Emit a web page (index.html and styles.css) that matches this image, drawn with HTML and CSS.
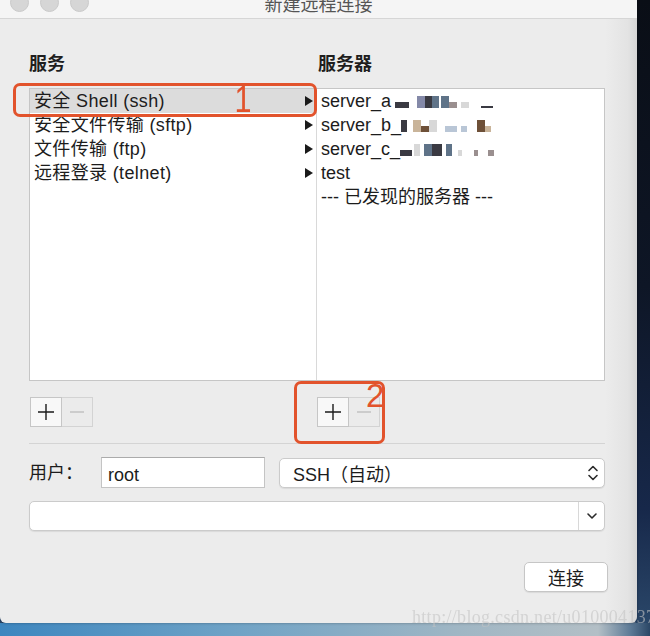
FILE: index.html
```html
<!DOCTYPE html>
<html lang="zh-CN">
<head>
<meta charset="utf-8">
<title>新建远程连接</title>
<link rel="stylesheet" href="styles.css">
</head>
<body>
<div class="window">
  <div class="titlebar">
    <div class="lights"><span class="light"></span><span class="light"></span><span class="light"></span></div>
    <div class="title">新建远程连接</div>
    <div></div>
  </div>
  <div class="content">
    <div class="cols headings">
      <div class="heading">服务</div>
      <div class="heading heading-right">服务器</div>
    </div>
    <div class="table">
      <ul class="list list-services">
        <li class="row selected"><span>安全 Shell (ssh)</span><i class="arrow"></i></li>
        <li class="row"><span>安全文件传输 (sftp)</span><i class="arrow"></i></li>
        <li class="row"><span>文件传输 (ftp)</span><i class="arrow"></i></li>
        <li class="row"><span>远程登录 (telnet)</span><i class="arrow"></i></li>
      </ul>
      <ul class="list list-servers">
        <li class="row">server_a<span class="mosaic"><i class="mz w14 dark short g4"></i><i class="mz w8 blue g8"></i><i class="mz w7 dark"></i><i class="mz w7 slate"></i><i class="mz w8 slate g2"></i><i class="mz w8 mid short"></i><i class="mz w8 light short g4"></i><i class="mz w12 dark line g12"></i></span></li>
        <li class="row">server_b_<span class="mosaic"><i class="mz w6 dark"></i><i class="mz w8 tan g6"></i><i class="mz w8 brown short"></i><i class="mz w8 light"></i><i class="mz w12 pale short g8"></i><i class="mz w6 pale short g4"></i><i class="mz w8 brown g10"></i><i class="mz w6 tan short"></i></span></li>
        <li class="row">server_c_<span class="mosaic"><i class="mz w12 dark short"></i><i class="mz w6 light g2"></i><i class="mz w8 slate g4"></i><i class="mz w10 dark"></i><i class="mz w6 slate g4"></i><i class="mz w4 light short g6"></i><i class="mz w4 mid short g12"></i><i class="mz w6 mid short g10"></i></span></li>
        <li class="row">test</li>
        <li class="row">--- 已发现的服务器 ---</li>
      </ul>
    </div>
    <div class="cols buttons">
      <div class="seg seg-left">
        <button class="seg-btn plus" type="button"><svg width="18" height="18" viewBox="0 0 18 18"><path d="M9 1v16M1 9h16" stroke="#1a1a1a" stroke-width="1.4" fill="none"/></svg></button>
        <button class="seg-btn minus" type="button"><svg width="16" height="18" viewBox="0 0 16 18"><path d="M1 9h14" stroke="#b8b8b8" stroke-width="1.2" fill="none"/></svg></button>
      </div>
      <div class="seg">
        <button class="seg-btn plus" type="button"><svg width="18" height="18" viewBox="0 0 18 18"><path d="M9 1v16M1 9h16" stroke="#1a1a1a" stroke-width="1.4" fill="none"/></svg></button>
        <button class="seg-btn minus" type="button"><svg width="16" height="18" viewBox="0 0 16 18"><path d="M1 9h14" stroke="#b8b8b8" stroke-width="1.2" fill="none"/></svg></button>
      </div>
    </div>
    <div class="separator"></div>
    <div class="user-row">
      <div class="label">用户：</div>
      <div class="input">root</div>
      <div class="select">
        <span>SSH（自动）</span>
        <svg width="12" height="20" viewBox="0 0 12 20"><path d="M2 7.5l4-4 4 4M2 12.5l4 4 4-4" stroke="#2a2a2a" stroke-width="1.6" fill="none" stroke-linecap="round" stroke-linejoin="round"/></svg>
      </div>
    </div>
    <div class="combo">
      <div class="combo-field"></div>
      <div class="combo-btn"><svg width="12" height="8" viewBox="0 0 12 8"><path d="M2 2l4 4 4-4" stroke="#2a2a2a" stroke-width="1.6" fill="none" stroke-linecap="round" stroke-linejoin="round"/></svg></div>
    </div>
    <div class="actions">
      <button class="btn" type="button">连接</button>
    </div>
  </div>
  <div class="mark mark1"></div>
  <div class="mark-num mark-num1">1</div>
  <div class="mark mark2"></div>
  <div class="mark-num mark-num2">2</div>
</div>
<div class="watermark">http://blog.csdn.net/u010004137</div>
</body>
</html>
```

FILE: styles.css
```css
html, body {
  margin: 0;
  padding: 0;
}
body {
  width: 650px;
  height: 636px;
  overflow: hidden;
  position: relative;
  font-family: "Liberation Sans", "Noto Sans CJK SC", sans-serif;
  color: #1c1c1c;
  background:
    linear-gradient(to right, #3d86bf 0%, #6ea2c6 35%, #9fb6c4 70%, #b3bfc6 92%, #5d7a96 97%, #2b4766 100%) left bottom / 100% 13px no-repeat,
    linear-gradient(to bottom, #0a0e16 0%, #0e1626 45%, #17284a 80%, #2c4a6c 100%);
}
.window {
  width: 637px;
  height: 623px;
  position: relative;
  border-radius: 0 0 6px 6px;
  background: linear-gradient(to right, #ececec 0, #ececec 605px, #e3e3e3 628px, #d6d6d6 637px);
  box-shadow: 0 0 3px rgba(0, 0, 0, 0.35);
  overflow: hidden;
}
.titlebar {
  height: 18px;
  background: #f5f5f5;
  border-bottom: 1px solid #d6d6d6;
  display: grid;
  grid-template-columns: 1fr auto 1fr;
  overflow: hidden;
}
.lights {
  display: flex;
  gap: 11px;
  padding-left: 10px;
  margin-top: -7px;
}
.light {
  width: 19px;
  height: 19px;
  box-sizing: border-box;
  border-radius: 50%;
  background: #d6d6d6;
  border: 1px solid #cacaca;
}
.title {
  font-size: 18px;
  line-height: 20px;
  margin-top: -5px;
  color: #555;
}
.content {
  padding: 33px 32px 0 29px;
}
.cols {
  display: grid;
  grid-template-columns: 288px 1fr;
}
.headings {
  margin-bottom: 12px;
}
.heading {
  font-size: 18px;
  font-weight: 600;
  line-height: 24px;
  color: #1e1e1e;
}
.heading-right {
  padding-left: 1px;
}
.table {
  display: grid;
  grid-template-columns: 287px 1fr;
  height: 293px;
  box-sizing: border-box;
  border: 1px solid #c6c6c6;
  background: #fff;
}
.list {
  list-style: none;
  margin: 0;
  padding: 0;
}
.list-services {
  border-right: 1px solid #d9d9d9;
}
.row {
  height: 24px;
  line-height: 24px;
  font-size: 18px;
  padding: 0 4px;
  white-space: nowrap;
}
.list-services .row {
  display: flex;
  justify-content: space-between;
  align-items: center;
  padding-right: 3px;
  letter-spacing: 0.35px;
}
.row.selected {
  background: #dcdcdc;
}
.arrow {
  width: 0;
  height: 0;
  border-left: 8px solid #1a1a1a;
  border-top: 5px solid transparent;
  border-bottom: 5px solid transparent;
}
.mosaic {
  display: inline-block;
  filter: blur(0.7px);
}
.mz {
  display: inline-block;
  height: 12px;
  vertical-align: -1px;
}
.mz.short { height: 6px; }
.mz.line { height: 2px; }
.w4 { width: 4px; }
.w6 { width: 6px; }
.w7 { width: 7px; }
.w8 { width: 8px; }
.w10 { width: 10px; }
.w12 { width: 12px; }
.w14 { width: 14px; }
.g2 { margin-left: 2px; }
.g4 { margin-left: 4px; }
.g6 { margin-left: 6px; }
.g8 { margin-left: 8px; }
.g10 { margin-left: 10px; }
.g12 { margin-left: 12px; }
.dark { background: #3a3a42; }
.blue { background: #8489a8; }
.slate { background: #5f7388; }
.mid { background: #9a8f8f; }
.mosaic .light { background: #d8d8d8; border: 0; border-radius: 0; }
.tan { background: #c9b49a; }
.brown { background: #6e5038; }
.pale { background: #b9c6d6; }
.buttons {
  margin-top: 16px;
}
.seg {
  display: flex;
}
.seg-left {
  padding-left: 1px;
}
.seg-btn {
  width: 32px;
  height: 30px;
  box-sizing: border-box;
  padding: 0;
  margin: 0;
  border: 1px solid #c6c6c6;
  background: #f8f8f8;
  display: flex;
  align-items: center;
  justify-content: center;
}
.seg-btn.minus {
  width: 31px;
  border-color: #d3d3d3;
  border-left: none;
  background: #ebebeb;
}
.separator {
  margin-top: 16px;
  height: 1px;
  background: #d4d4d4;
}
.user-row {
  margin-top: 13px;
  display: flex;
  align-items: center;
  height: 31px;
}
.label {
  width: 72px;
  font-size: 18px;
  line-height: 24px;
}
.input {
  width: 164px;
  height: 31px;
  box-sizing: border-box;
  border: 1px solid #c4c4c4;
  border-top-color: #ababab;
  background: #fff;
  font-size: 18px;
  line-height: 24px;
  padding: 5px 0 0 6px;
}
.select {
  margin-left: 14px;
  flex: 1;
  height: 30px;
  box-sizing: border-box;
  border: 1px solid #cbcbcb;
  border-radius: 5px;
  background: #fff;
  box-shadow: 0 1px 1px rgba(0, 0, 0, 0.08);
  display: flex;
  align-items: center;
  justify-content: space-between;
  padding: 0 5px 0 13px;
  font-size: 18px;
}
.combo {
  margin-top: 13px;
  height: 30px;
  box-sizing: border-box;
  display: flex;
  border: 1px solid #cbcbcb;
  border-radius: 5px;
  background: #fff;
  box-shadow: 0 1px 1px rgba(0, 0, 0, 0.08);
  overflow: hidden;
}
.combo-field {
  flex: 1;
}
.combo-btn {
  width: 25px;
  border-left: 1px solid #d8d8d8;
  display: flex;
  align-items: center;
  justify-content: center;
}
.actions {
  margin-top: 31px;
  margin-right: -3px;
  display: flex;
  justify-content: flex-end;
}
.btn {
  width: 84px;
  height: 30px;
  box-sizing: border-box;
  border: 1px solid #c6c6c6;
  border-radius: 5px;
  background: #fff;
  box-shadow: 0 1px 1px rgba(0, 0, 0, 0.08);
  font-family: "Liberation Sans", "Noto Sans CJK SC", sans-serif;
  font-size: 18px;
  color: #1c1c1c;
  padding: 0;
}
.mark {
  position: absolute;
  box-sizing: border-box;
  border: 3px solid #e2532c;
  border-radius: 7px;
}
.mark1 {
  left: 13px;
  top: 83px;
  width: 304px;
  height: 34px;
}
.mark2 {
  left: 294px;
  top: 381px;
  width: 91px;
  height: 63px;
}
.mark-num {
  position: absolute;
  color: #e2532c;
  font-family: "Liberation Sans", sans-serif;
  line-height: 1;
}
.mark-num1 {
  left: 233px;
  top: 82px;
  font-size: 36px;
  transform: scaleX(0.85);
}
.mark-num2 {
  left: 366px;
  top: 379px;
  font-size: 33px;
}
.watermark {
  position: absolute;
  left: 412px;
  top: 607px;
  font-family: "Liberation Serif", serif;
  font-size: 18px;
  letter-spacing: 0.3px;
  color: rgba(195, 195, 195, 0.6);
  filter: blur(0.4px);
  white-space: nowrap;
}
```
